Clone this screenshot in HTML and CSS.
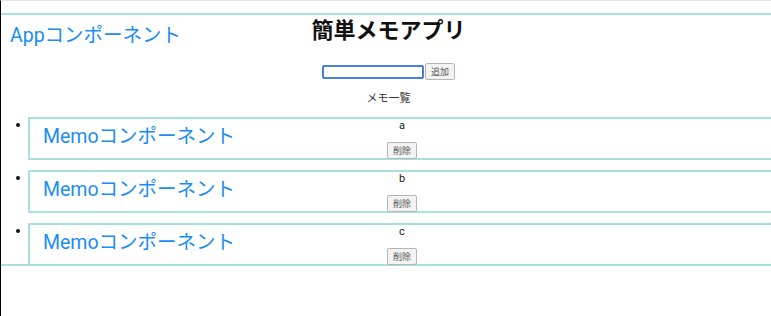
FILE: index.html
```html
<!DOCTYPE html>
<html lang="ja">
<head>
<meta charset="utf-8">
<title>簡単メモアプリ</title>
<link rel="stylesheet" href="styles.css">
</head>
<body>
<div class="page">
  <div class="app">
    <span class="tag tag-app">Appコンポーネント</span>
    <h1 class="title">簡単メモアプリ</h1>
    <div class="form">
      <input class="field" type="text" autofocus>
      <button class="btn">追加</button>
    </div>
    <p class="list-title">メモ一覧</p>
    <ul class="memos">
      <li class="memo-item">
        <div class="memo">
          <span class="tag tag-memo">Memoコンポーネント</span>
          <p class="memo-text">a</p>
          <button class="btn btn-del">削除</button>
        </div>
      </li>
      <li class="memo-item">
        <div class="memo">
          <span class="tag tag-memo">Memoコンポーネント</span>
          <p class="memo-text">b</p>
          <button class="btn btn-del">削除</button>
        </div>
      </li>
      <li class="memo-item">
        <div class="memo">
          <span class="tag tag-memo">Memoコンポーネント</span>
          <p class="memo-text">c</p>
          <button class="btn btn-del">削除</button>
        </div>
      </li>
    </ul>
  </div>
</div>
</body>
</html>
```

FILE: styles.css
```css
html, body {
  margin: 0;
  padding: 0;
  overflow: hidden;
  background: #fff;
}

body {
  font-family: Roboto, "Noto Sans CJK JP", sans-serif;
  font-size: 11px;
  color: #222;
}

.page {
  box-sizing: border-box;
  height: 316px;
  border-left: 1px solid #000;
  border-top: 1px solid #e4e4e4;
  padding-top: 12px;
}

.app {
  position: relative;
  width: 775px;
  border: 2px solid #a6e0e0;
  border-left: 0;
  text-align: center;
}

.tag {
  position: absolute;
  font-size: 19.5px;
  line-height: 24px;
  color: #1a8cf5;
  white-space: nowrap;
}

.tag-app {
  left: 9px;
  top: 9px;
}

.tag-memo {
  left: 13px;
  top: 6px;
}

.title {
  margin: 0;
  padding-top: 2px;
  font-size: 22px;
  line-height: 28px;
  font-weight: bold;
  color: #111;
}

.form {
  margin-top: 18px;
  display: flex;
  justify-content: center;
  align-items: center;
  gap: 1px;
}

.field {
  box-sizing: border-box;
  width: 102px;
  height: 14px;
  margin: 0;
  padding: 0 2px;
  border: 2px solid #4a7fe2;
  border-radius: 2px;
  outline: none;
}

.btn {
  box-sizing: border-box;
  height: 17px;
  margin: 0;
  padding: 0 5px;
  font-family: "Noto Sans CJK JP", sans-serif;
  font-size: 9px;
  line-height: 13px;
  color: #555;
  background: #f3f3f3;
  border: 1px solid #b5b5b5;
  border-radius: 2px;
}

.btn-del {
  width: 30px;
  padding: 0;
}

.list-title {
  margin: 12px 0 0;
  line-height: 13px;
  color: #333;
}

.memos {
  margin: 12px 0 0;
  padding-left: 27px;
  list-style: none;
}

.memo-item {
  position: relative;
  margin-bottom: 10px;
}

.memo-item::before {
  content: "";
  position: absolute;
  left: -12px;
  top: 6px;
  width: 4px;
  height: 4px;
  border-radius: 50%;
  background: #111;
}

.memo-item:last-child {
  margin-bottom: -2px;
}

.memo {
  position: relative;
  border: 2px solid #a6e0e0;
  height: 39px;
}

.memo-text {
  margin: 0 0 10px;
  line-height: 13px;
}
```
